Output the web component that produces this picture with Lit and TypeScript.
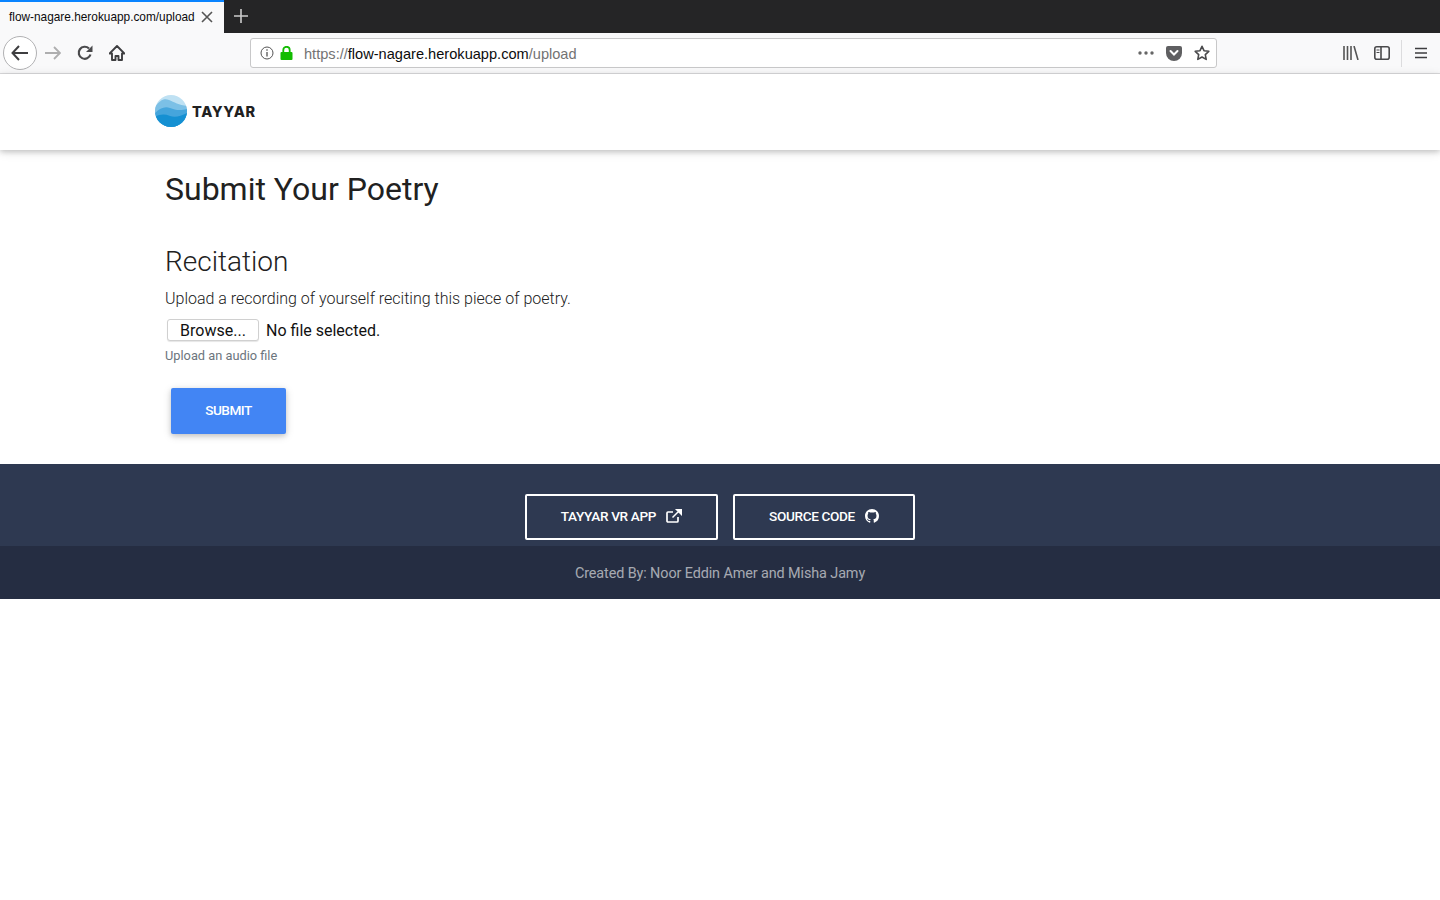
import { LitElement, html, css } from "lit";
import { customElement } from "lit/decorators.js";

@customElement("app-root")
export class AppRoot extends LitElement {
  static styles = css`
    :host { display: block; min-height: 900px; background: #fff; font-family: Roboto, sans-serif; color: #212529; }
    svg { display: block; flex: none; }
    .tabbar { height: 33px; background: #252526; display: flex; align-items: stretch; }
    .tab { width: 224px; box-sizing: border-box; background: #f9f9fa; border-top: 2px solid #0a84ff; display: flex; align-items: center; padding: 0 11px 2px 9px; justify-content: space-between; font: 11.85px "Liberation Sans", sans-serif; color: #0c0c0d; }
    .newtab { width: 33px; display: flex; align-items: center; justify-content: center; padding-bottom: 2px; }
    .toolbar { height: 41px; box-sizing: border-box; background: #f9f9fa; border-bottom: 1px solid #dcdcde; display: flex; align-items: center; padding: 0 0 0 3px; }
    .back { width: 34px; height: 34px; box-sizing: border-box; border: 1px solid #b1b1b3; border-radius: 50%; background: #fff; display: flex; align-items: center; justify-content: center; }
    .navicons { display: flex; align-items: center; gap: 16px; margin-left: 8px; }
    .urlbar { margin-left: 125px; width: 967px; height: 30px; box-sizing: border-box; border: 1px solid #c8c8c9; border-radius: 3px; background: #fff; display: flex; align-items: center; padding: 0 6px 0 9px; }
    .url { margin-left: 11px; padding-top: 1px; font: 14.6px "Liberation Sans", sans-serif; color: #737373; flex: 1; }
    .url b { font-weight: 400; color: #0c0c0d; }
    .urlright { display: flex; align-items: center; gap: 12px; }
    .tools { margin-left: 126px; display: flex; align-items: center; gap: 15px; }
    .sep { width: 1px; height: 27px; background: #dcdcde; margin: 0 -2px 0 -4px; }
    nav { height: 76px; box-sizing: border-box; padding: 0 0 1px 155px; display: flex; align-items: center; background: #fff; box-shadow: 0 2px 5px rgba(0,0,0,.16), 0 2px 10px rgba(0,0,0,.12); position: relative; }
    .logo { margin-top: -2px; }
    .brand { margin-left: 5px; font: 800 14.5px Inter, "Liberation Sans", sans-serif; color: #212121; letter-spacing: .65px; }
    main { padding: 20px 0 0 165px; height: 314px; box-sizing: border-box; }
    h1 { margin: 0; font-size: 32px; line-height: 38px; font-weight: 400; color: #212121; }
    h2 { margin: 37px 0 0; font-size: 28px; line-height: 34px; font-weight: 300; color: #212121; }
    p { margin: 8px 0 0; font-size: 16px; line-height: 24px; font-weight: 300; color: #212121; }
    .file { margin: 7px 0 0 2px; display: flex; align-items: center; height: 24px; font: 16px Roboto, sans-serif; color: #111; }
    .browse { width: 92px; height: 22px; box-sizing: border-box; padding: 0; border: 1px solid #d0d0d0; border-radius: 3px; background: #fff; font: 16px Roboto, sans-serif; color: #111; box-shadow: 0 1px 1px rgba(0,0,0,.1); margin-right: 7px; }
    small { display: block; margin-top: 4px; font-size: 12.8px; line-height: 19px; color: #6c757d; }
    .submit { display: block; margin: 23px 0 0 6px; width: 115px; height: 46px; border: 0; border-radius: 2px; background: #4285f4; color: #fff; font: 500 13.6px Roboto, sans-serif; letter-spacing: -.5px; box-shadow: 0 2px 5px rgba(0,0,0,.16), 0 2px 10px rgba(0,0,0,.12); padding: 0 0 2px; }
    .fmain { height: 82px; box-sizing: border-box; background: #2e3951; display: flex; justify-content: center; gap: 15px; padding-top: 30px; }
    .fbtn { height: 46px; box-sizing: border-box; border: 2px solid #fff; border-radius: 2px; display: flex; align-items: center; justify-content: center; gap: 10px; padding-bottom: 2px; color: #fff; font: 500 13.6px Roboto, sans-serif; letter-spacing: -.35px; }
    .fbtn.a { width: 193px; }
    .fbtn.b { width: 182px; }
    .fcopy { height: 53px; padding-top: 1px; box-sizing: border-box; background: #252d42; color: rgba(255,255,255,.6); display: flex; align-items: center; justify-content: center; font-size: 14.4px; letter-spacing: -.1px; }
  `;

  render() {
    return html`
      <div class="tabbar">
        <div class="tab">
          <span>flow-nagare.herokuapp.com/upload</span>
          <svg width="12" height="12" viewBox="0 0 12 12"><path d="M1 1l10 10M11 1L1 11" stroke="#555" stroke-width="1.6"/></svg>
        </div>
        <div class="newtab"><svg width="14" height="14" viewBox="0 0 14 14"><path d="M7 0v14M0 7h14" stroke="#ccc" stroke-width="1.6"/></svg></div>
      </div>
      <div class="toolbar">
        <div class="back"><svg width="18" height="16" viewBox="0 0 18 16"><path d="M8 1L1.5 8 8 15M2 8h15" fill="none" stroke="#3e3e40" stroke-width="2"/></svg></div>
        <div class="navicons">
          <svg width="16" height="14" viewBox="0 0 16 14"><path d="M9 1l6 6-6 6M14.5 7H0" fill="none" stroke="#aeaeaf" stroke-width="1.8"/></svg>
          <svg width="16" height="16" viewBox="0 0 16 16"><path d="M13.5 9.5A6 6 0 1 1 12 3.5" fill="none" stroke="#4a4a4c" stroke-width="2.2"/><path d="M15.5 0.5v6.500h-6.500z" fill="#4a4a4c"/></svg>
          <svg width="16" height="16" viewBox="0 0 16 16"><path d="M8 1L0.5 8.500h2.500V15h3.500v-4h3v4H13V8.500h2.500z" fill="none" stroke="#3e3e40" stroke-width="1.9" stroke-linejoin="round"/></svg>
        </div>
        <div class="urlbar">
          <svg width="14" height="14" viewBox="0 0 14 14"><circle cx="7" cy="7" r="6" fill="none" stroke="#555" stroke-width="1"/><path d="M7 6v4.500M7 3.300v1.400" stroke="#555" stroke-width="1.300"/></svg>
          <svg style="margin-left:6px" width="13" height="14" viewBox="0 0 13 14"><rect x="0.5" y="6" width="12" height="8" rx="1" fill="#12bc00"/><path d="M3.300 6.500V4a3.200 3.200 0 0 1 6.400 0v2.500" fill="none" stroke="#12bc00" stroke-width="1.800"/></svg>
          <div class="url">https://<b>flow-nagare.herokuapp.com</b>/upload</div>
          <div class="urlright">
            <svg width="16" height="4" viewBox="0 0 16 4"><circle cx="2" cy="2" r="1.700" fill="#666"/><circle cx="8" cy="2" r="1.700" fill="#666"/><circle cx="14" cy="2" r="1.700" fill="#666"/></svg>
            <svg width="16" height="15" viewBox="0 0 16 15"><path d="M2 0h12a2 2 0 0 1 2 2v5a8 8 0 0 1-16 0V2a2 2 0 0 1 2-2z" fill="#5f5f61"/><path d="M4.500 5L8 8.500 11.500 5" fill="none" stroke="#fff" stroke-width="2" stroke-linecap="round"/></svg>
            <svg width="16" height="16" viewBox="0 0 16 16"><path d="M8 1.300l2 4.400 4.800.6-3.500 3.300.9 4.800L8 12l-4.200 2.400.9-4.800L1.200 6.300 6 5.700z" fill="none" stroke="#4a4a4c" stroke-width="1.600" stroke-linejoin="round"/></svg>
          </div>
        </div>
        <div class="tools">
          <svg width="16" height="14" viewBox="0 0 16 14"><path d="M1 0v14M4.500 0v14M8 0v14M11 0l4 14" fill="none" stroke="#555" stroke-width="1.600"/></svg>
          <svg width="16" height="14" viewBox="0 0 16 14"><rect x="0.8" y="0.8" width="14.4" height="12.4" rx="2" fill="none" stroke="#4a4a4c" stroke-width="1.600"/><path d="M7 1v12" stroke="#4a4a4c" stroke-width="1.600"/><path d="M2.500 4h3M2.500 6.500h3" stroke="#4a4a4c" stroke-width="1"/></svg>
          <div class="sep"></div>
          <svg width="12" height="12" viewBox="0 0 12 12"><path d="M0 1.500h12M0 6h12M0 10.500h12" stroke="#3e3e40" stroke-width="1.700"/></svg>
        </div>
      </div>
      <nav>
        <svg class="logo" width="32" height="32" viewBox="0 0 32 32">
          <defs><clipPath id="c"><circle cx="16" cy="16" r="16"/></clipPath></defs>
          <g clip-path="url(#c)">
            <rect width="32" height="32" fill="#bfe1f3"/>
            <path d="M0 12C5 5 9 3 14 5s10 5 18 6v21H0z" fill="#7cc0e6"/>
            <path d="M0 18c5-5 10-7 15-5s10 3 17 1v18H0z" fill="#45a5dc"/>
            <path d="M0 22c5-3 10-3 15-1s11 0 17-3v14H0z" fill="#1590d2"/>
          </g>
        </svg>
        <span class="brand">TAYYAR</span>
      </nav>
      <main>
        <h1>Submit Your Poetry</h1>
        <h2>Recitation</h2>
        <p>Upload a recording of yourself reciting this piece of poetry.</p>
        <div class="file"><button class="browse">Browse...</button><span>No file selected.</span></div>
        <small>Upload an audio file</small>
        <button class="submit">SUBMIT</button>
      </main>
      <footer>
        <div class="fmain">
          <div class="fbtn a">TAYYAR VR APP
            <svg width="16" height="14" viewBox="0 0 16 14"><path d="M12 8v4a1 1 0 0 1-1 1H2a1 1 0 0 1-1-1V4a1 1 0 0 1 1-1h5" fill="none" stroke="#fff" stroke-width="1.700"/><path d="M10 0h6v6z M13 2L6.500 8.500" fill="#fff" stroke="#fff" stroke-width="1.500"/></svg>
          </div>
          <div class="fbtn b">SOURCE CODE
            <svg width="14" height="14" viewBox="0 0 16 16"><path fill="#fff" d="M8 0C3.58 0 0 3.58 0 8c0 3.54 2.29 6.53 5.47 7.59.4.07.55-.17.55-.38 0-.19-.01-.82-.01-1.49-2.01.37-2.53-.49-2.69-.94-.09-.23-.48-.94-.82-1.13-.28-.15-.68-.52-.01-.53.63-.01 1.080.58 1.230.82.72 1.210 1.870.87 2.330.66.070-.52.280-.87.510-1.070-1.780-.2-3.640-.89-3.640-3.950 0-.87.310-1.590.820-2.150-.080-.2-.360-1.020.080-2.120 0 0 .670-.210 2.200.820.640-.180 1.320-.270 2-.270.680 0 1.360.090 2 .270 1.530-1.040 2.200-.820 2.200-.820.440 1.100.160 1.920.080 2.120.510.560.820 1.270.820 2.150 0 3.070-1.870 3.750-3.650 3.950.290.250.540.730.540 1.480 0 1.070-.010 1.930-.010 2.200 0 .210.150.460.550.380A8.013 8.013 0 0 0 16 8c0-4.420-3.580-8-8-8z"/></svg>
          </div>
        </div>
        <div class="fcopy">Created By: Noor Eddin Amer and Misha Jamy</div>
      </footer>
    `;
  }
}
